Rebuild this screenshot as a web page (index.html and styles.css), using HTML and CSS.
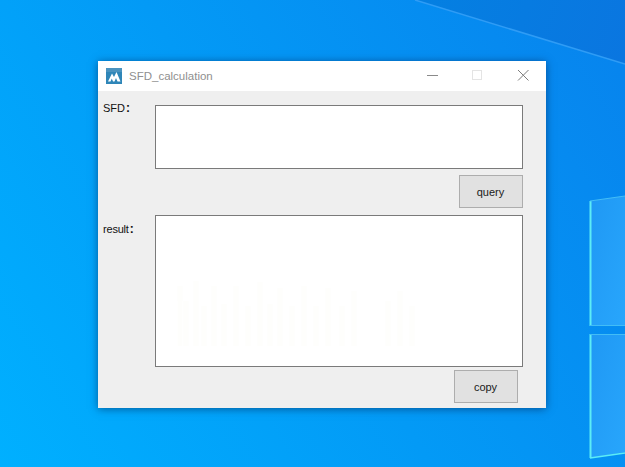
FILE: index.html
```html
<!DOCTYPE html>
<html lang="en">
<head>
<meta charset="utf-8">
<title>SFD_calculation</title>
<link rel="stylesheet" href="styles.css">
</head>
<body>
<div class="desktop">
  <svg class="wallpaper" width="625" height="467" viewBox="0 0 625 467" aria-hidden="true">
    <defs>
      <linearGradient id="bg" gradientUnits="userSpaceOnUse" x1="625" y1="80" x2="0" y2="467">
        <stop offset="0" stop-color="#0785ee"/>
        <stop offset="0.5" stop-color="#039af6"/>
        <stop offset="1" stop-color="#00b0ff"/>
      </linearGradient>
      <linearGradient id="corner" gradientUnits="userSpaceOnUse" x1="415" y1="0" x2="625" y2="60">
        <stop offset="0" stop-color="#0480e2"/>
        <stop offset="1" stop-color="#0a76e0"/>
      </linearGradient>
      <linearGradient id="pane" x1="0" y1="0" x2="1" y2="1">
        <stop offset="0" stop-color="#1f98f4"/>
        <stop offset="1" stop-color="#28a6fc"/>
      </linearGradient>
    </defs>
    <rect width="625" height="467" fill="url(#bg)"/>
    <polygon points="415,0 625,64 625,0" fill="url(#corner)"/>
    <line x1="415" y1="0" x2="625" y2="64" stroke="#2f9cf5" stroke-width="1.500"/>
    <polygon points="590,201 625,196 625,326 590,326" fill="url(#pane)"/>
    <polygon points="590,334 625,334 625,452 590,458" fill="url(#pane)"/>
    <path d="M590.500 201V326M590.500 334V458" stroke="#5cecf6" stroke-width="2" fill="none"/>
    <path d="M590 325.500H625M590 334.500H625" stroke="#42bdf6" stroke-width="1" fill="none"/>
    <path d="M590 458L625 453" stroke="#5cecf6" stroke-width="1.500" fill="none"/>
    <path d="M590 201L625 196" stroke="#42bdf6" stroke-width="1" fill="none"/>
  </svg>

  <section class="window">
    <header class="titlebar">
      <svg class="app-icon" width="16" height="16" viewBox="0 0 16 16" aria-hidden="true">
        <rect width="16" height="16" fill="#2f86b8"/>
        <rect width="16" height="4" fill="#4a93bf"/>
        <path d="M2 13.500L6 5.500L8 9L10.500 4L14.500 13.500H11.500L10 10L8.500 13.500H7L5.800 10.500L4.500 13.500Z" fill="#fff"/>
      </svg>
      <span class="app-title">SFD_calculation</span>
      <div class="controls">
        <svg class="ctl ctl-min" width="46" height="30" viewBox="0 0 46 30" aria-hidden="true"><path d="M17 14.500H28" stroke="#8a8a8a" stroke-width="1"/></svg>
        <svg class="ctl" width="46" height="30" viewBox="0 0 46 30" aria-hidden="true"><rect x="18.500" y="9.500" width="9" height="9" fill="none" stroke="#e4e4e4" stroke-width="1"/></svg>
        <svg class="ctl" width="46" height="30" viewBox="0 0 46 30" aria-hidden="true"><path d="M18 9L28.500 19.500M28.500 9L18 19.500" stroke="#7c7c7c" stroke-width="1"/></svg>
      </div>
    </header>
    <main class="content">
      <div class="field">
        <label class="field-label">SFD<b class="colon">:</b></label>
        <div class="box box-sfd"></div>
      </div>
      <div class="action action-query"><button class="btn" type="button">query</button></div>
      <div class="field">
        <label class="field-label label-result">result<b class="colon">:</b></label>
        <div class="box box-result">
          <svg class="ghost" width="366" height="150" viewBox="0 0 366 150" aria-hidden="true">
            <path d="M24 70v60M30 85v45M40 65v65M48 90v40M58 70v60M68 88v42M80 70v60M92 90v40M104 66v64M114 88v42M124 72v58M136 90v40M148 70v60M160 90v40M172 72v58M186 90v40M198 75v55M232 85v45M244 75v55M256 90v40" stroke="#fefefc" stroke-width="5" fill="none"/>
          </svg>
        </div>
      </div>
      <div class="action action-copy"><button class="btn" type="button">copy</button></div>
    </main>
  </section>
</div>
</body>
</html>
```

FILE: styles.css
```css
html, body {
  margin: 0;
  padding: 0;
  height: 100%;
  overflow: hidden;
}

.desktop {
  position: relative;
  width: 625px;
  height: 467px;
  overflow: hidden;
  font-family: "Liberation Sans", Arial, sans-serif;
}

.wallpaper {
  position: absolute;
  left: 0;
  top: 0;
  display: block;
}

.window {
  position: absolute;
  left: 98px;
  top: 61px;
  width: 448px;
  height: 347px;
  background: #efefef;
  box-shadow: 0 1px 8px rgba(0, 40, 90, 0.6);
  display: flex;
  flex-direction: column;
}

.titlebar {
  height: 30px;
  background: #fff;
  display: flex;
  align-items: center;
  padding-left: 8px;
  box-sizing: border-box;
}

.app-icon {
  display: block;
  flex: none;
}

.app-title {
  margin-left: 7px;
  font-size: 11.5px;
  color: #8f8f8f;
}

.controls {
  margin-left: auto;
  display: flex;
}

.ctl {
  display: block;
}

.ctl-min {
  transform: translateX(2px);
}

.content {
  padding: 14px 23px 0 5px;
  display: flex;
  flex-direction: column;
}

.field {
  display: flex;
}

.field-label {
  width: 52px;
  flex: none;
  font-size: 11px;
  line-height: 13px;
  color: #111;
  margin-top: -3px;
}

.label-result {
  margin-top: 8px;
  letter-spacing: -0.2px;
}

.colon {
  font-weight: bold;
  font-size: 12px;
  margin-left: 1px;
}

.box {
  flex: 1;
  box-sizing: border-box;
  background: #fff;
  border: 1px solid #7a7a7a;
}

.box-sfd {
  height: 64px;
}

.box-result {
  height: 152px;
}

.ghost {
  display: block;
}

.action {
  display: flex;
  justify-content: flex-end;
}

.action-query {
  margin: 6px 0 7px;
}

.action-copy {
  margin: 3px 5px 0 0;
}

.btn {
  width: 64px;
  height: 33px;
  box-sizing: border-box;
  margin: 0;
  padding: 0 1px 0 0;
  background: #e1e1e1;
  border: 1px solid #adadad;
  font-family: "Liberation Sans", Arial, sans-serif;
  font-size: 11px;
  color: #1a1a1a;
}
```
